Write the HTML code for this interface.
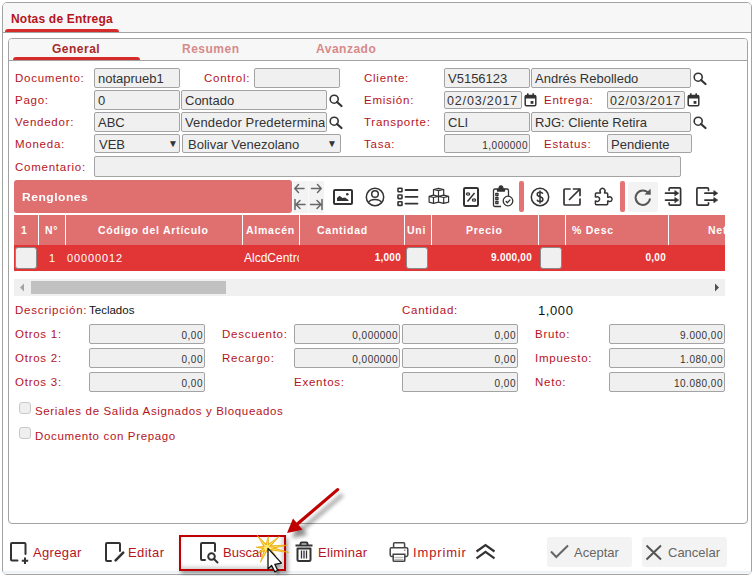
<!DOCTYPE html>
<html><head><meta charset="utf-8">
<style>
*{box-sizing:border-box;margin:0;padding:0}
html,body{width:755px;height:576px;overflow:hidden;background:#fff;font-family:"Liberation Sans",sans-serif;position:relative}
.a{position:absolute}
.frame{left:2px;top:2px;width:750px;height:573px;border:1px solid #a3a3a3;border-radius:5px;background:#fff}
.hdr{left:3px;top:3px;width:748px;height:29px;background:#f7f7f7;border-radius:4px 4px 0 0}
.hline{left:3px;top:32px;width:748px;height:1px;background:#a3a3a3}
.title{left:11px;top:12px;font-size:12px;font-weight:bold;color:#b5141e;letter-spacing:0.2px;line-height:14px}
.redbar{background:#d62b2b;border-radius:3px 3px 0 0}
.panel{left:8px;top:38px;width:740px;height:486px;border:1px solid #a3a3a3;border-radius:4px;background:#fff}
.tabs{left:9px;top:39px;width:738px;height:21px;background:#f7f7f7;border-radius:3px 3px 0 0}
.tline{left:9px;top:60px;width:738px;height:1px;background:#a3a3a3}
.tab{top:42px;font-size:12px;font-weight:bold;letter-spacing:0.5px;line-height:14px;color:#d68a8a}
.lbl{font-size:11.5px;letter-spacing:0.75px;color:#b5141e;line-height:13px;white-space:nowrap;margin-top:1px}
.inp{border:1px solid #a3a3a3;background:#f0f0f0;border-radius:2px;font-size:13px;color:#333;padding-left:3px;padding-top:1px;white-space:nowrap;overflow:hidden}
.num{font-size:10px;text-align:right;padding-right:1px;padding-left:0;padding-top:2px;color:#333;letter-spacing:0.5px}
.ic{position:absolute;overflow:visible;z-index:2}
.hd{font-size:10.5px;font-weight:bold;letter-spacing:0.75px;color:#fff;line-height:13px;white-space:nowrap}
.cell{font-size:12px;color:#fff;line-height:14px;white-space:nowrap}
.cb{background:#f0f0f0;border:1px solid #8a8a8a;border-radius:3px}
.tbt{font-size:13px;color:#b5141e;line-height:15px;white-space:nowrap}
</style></head><body>
<div class="a frame"></div>
<div class="a hdr"></div>
<div class="a" style="left:3px;top:571px;width:748px;height:3px;background:linear-gradient(#eef2f5,#eef2f5 66%,#f6f9fb 66%);border-radius:0 0 4px 4px"></div>
<div class="a hline"></div>
<div class="a title">Notas de Entrega</div>
<div class="a redbar" style="left:5px;top:29px;width:114px;height:3px"></div>

<div class="a panel"></div>
<div class="a tabs"></div>
<div class="a tline"></div>
<div class="a tab" style="left:52px;color:#a82a2a">General</div>
<div class="a tab" style="left:182px">Resumen</div>
<div class="a tab" style="left:316px">Avanzado</div>
<div class="a redbar" style="left:13px;top:57px;width:127px;height:3px"></div>

<!-- form labels -->
<div class="a lbl" style="left:15px;top:71px">Documento:</div>
<div class="a lbl" style="left:204px;top:71px">Control:</div>
<div class="a lbl" style="left:364px;top:71px">Cliente:</div>
<div class="a lbl" style="left:15px;top:93px">Pago:</div>
<div class="a lbl" style="left:364px;top:93px">Emisión:</div>
<div class="a lbl" style="left:544px;top:93px">Entrega:</div>
<div class="a lbl" style="left:15px;top:115px">Vendedor:</div>
<div class="a lbl" style="left:364px;top:115px">Transporte:</div>
<div class="a lbl" style="left:15px;top:137px">Moneda:</div>
<div class="a lbl" style="left:364px;top:137px">Tasa:</div>
<div class="a lbl" style="left:544px;top:137px">Estatus:</div>
<div class="a lbl" style="left:15px;top:160px">Comentario:</div>

<!-- inputs row1 -->
<div class="a inp" style="left:94px;top:68px;width:86px;height:20px;line-height:18px">notaprueb1</div>
<div class="a inp" style="left:254px;top:68px;width:86px;height:20px"></div>
<div class="a inp" style="left:444px;top:68px;width:86px;height:20px;line-height:18px">V5156123</div>
<div class="a inp" style="left:531px;top:68px;width:160px;height:20px;line-height:18px">Andrés Rebolledo</div>
<!-- row2 -->
<div class="a inp" style="left:94px;top:90px;width:86px;height:20px;line-height:18px">0</div>
<div class="a inp" style="left:181px;top:90px;width:146px;height:20px;line-height:18px">Contado</div>
<div class="a inp" style="left:444px;top:91px;width:78px;height:18px;line-height:16px;padding-left:2px;letter-spacing:0.85px;font-size:12.5px">02/03/2017</div>
<div class="a inp" style="left:607px;top:91px;width:78px;height:18px;line-height:16px;padding-left:2px;letter-spacing:0.85px;font-size:12.5px">02/03/2017</div>
<!-- row3 -->
<div class="a inp" style="left:94px;top:112px;width:86px;height:20px;line-height:18px">ABC</div>
<div class="a inp" style="left:181px;top:112px;width:146px;height:20px;line-height:18px"><div style="width:140px;overflow:hidden;letter-spacing:0.15px">Vendedor Predeterminado</div></div>
<div class="a inp" style="left:444px;top:112px;width:86px;height:20px;line-height:18px">CLI</div>
<div class="a inp" style="left:531px;top:112px;width:160px;height:20px;line-height:18px">RJG: Cliente Retira</div>
<!-- row4 -->
<div class="a inp" style="left:94px;top:134px;width:86px;height:19px;line-height:17px;padding-left:4px">VEB<span class="a" style="left:73px;top:0;font-size:10px;color:#333">&#9660;</span></div>
<div class="a inp" style="left:182px;top:134px;width:159px;height:19px;line-height:17px;padding-left:5px">Bolivar Venezolano<span class="a" style="left:144px;top:0;font-size:10px;color:#333">&#9660;</span></div>
<div class="a inp num" style="left:444px;top:134px;width:86px;height:19px;line-height:17px">1,000000</div>
<div class="a inp" style="left:607px;top:134px;width:85px;height:19px;line-height:17px">Pendiente</div>
<!-- row5 -->
<div class="a inp" style="left:94px;top:156px;width:587px;height:21px"></div>

<!-- search icons -->
<svg class="ic" style="left:329px;top:94px" width="14" height="13" viewBox="0 0 14 13"><circle cx="5.2" cy="5.2" r="4" fill="none" stroke="#333" stroke-width="1.6"/><path d="M8 8 L12.5 12" stroke="#333" stroke-width="2.2" stroke-linecap="round"/></svg>
<svg class="ic" style="left:329px;top:116px" width="14" height="13" viewBox="0 0 14 13"><circle cx="5.2" cy="5.2" r="4" fill="none" stroke="#333" stroke-width="1.6"/><path d="M8 8 L12.5 12" stroke="#333" stroke-width="2.2" stroke-linecap="round"/></svg>
<svg class="ic" style="left:693px;top:72px" width="14" height="13" viewBox="0 0 14 13"><circle cx="5.2" cy="5.2" r="4" fill="none" stroke="#333" stroke-width="1.6"/><path d="M8 8 L12.5 12" stroke="#333" stroke-width="2.2" stroke-linecap="round"/></svg>
<svg class="ic" style="left:693px;top:116px" width="14" height="13" viewBox="0 0 14 13"><circle cx="5.2" cy="5.2" r="4" fill="none" stroke="#333" stroke-width="1.6"/><path d="M8 8 L12.5 12" stroke="#333" stroke-width="2.2" stroke-linecap="round"/></svg>
<!-- calendar icons -->
<svg class="ic" style="left:524px;top:93px" width="13" height="14" viewBox="0 0 13 14"><rect x="1.2" y="2.6" width="10.6" height="10.2" rx="1.2" fill="none" stroke="#333" stroke-width="1.5"/><rect x="1" y="2.4" width="11" height="3.2" rx="1" fill="#333"/><rect x="3" y="0.3" width="1.6" height="2.6" fill="#333"/><rect x="8.4" y="0.3" width="1.6" height="2.6" fill="#333"/><rect x="6.6" y="8" width="2.8" height="2.8" fill="#333"/></svg>
<svg class="ic" style="left:687px;top:93px" width="13" height="14" viewBox="0 0 13 14"><rect x="1.2" y="2.6" width="10.6" height="10.2" rx="1.2" fill="none" stroke="#333" stroke-width="1.5"/><rect x="1" y="2.4" width="11" height="3.2" rx="1" fill="#333"/><rect x="3" y="0.3" width="1.6" height="2.6" fill="#333"/><rect x="8.4" y="0.3" width="1.6" height="2.6" fill="#333"/><rect x="6.6" y="8" width="2.8" height="2.8" fill="#333"/></svg>

<!-- GRID TOOLBAR -->
<div class="a" style="left:14px;top:180px;width:278px;height:33px;background:#e07070;border-radius:3px"></div>
<div class="a hd" style="left:22px;top:191px;font-size:11px;letter-spacing:0.45px;transform:scaleX(1.1);transform-origin:0 0">Renglones</div>
<!-- arrow group -->
<div class="a" style="left:293px;top:181px;width:31px;height:32px;background:#f3f3f3"></div>
<div class="a" style="left:308px;top:181px;width:1px;height:32px;background:#fafafa"></div>
<svg class="ic" style="left:293px;top:181px" width="31" height="32" viewBox="0 0 31 32">
<g fill="none" stroke="#666" stroke-width="1.5" stroke-linecap="round" stroke-linejoin="round">
<path d="M2 7.5 H11 M5.5 3.5 L1.8 7.5 L5.5 11.5"/>
<path d="M18.5 7.5 H28 M24.5 3.5 L28.2 7.5 L24.5 11.5"/>
<path d="M2 18.5 V28.5 M3 23.5 H12 M7 19.5 L3 23.5 L7 27.5"/>
<path d="M29 18.5 V28.5 M17.5 23.5 H28 M24 19.5 L28 23.5 L24 27.5"/>
</g></svg>
<!-- image icon -->
<svg class="ic" style="left:333px;top:189px" width="20" height="16" viewBox="0 0 20 16">
<rect x="1" y="1" width="18" height="14" rx="1" fill="none" stroke="#333" stroke-width="2"/>
<path d="M4 12 L4 9 L6.5 6.8 L9.5 9 L12 8.5 L15.5 11 L15.5 12 Z" fill="#333"/>
<circle cx="14.3" cy="5.2" r="1.3" fill="#333"/>
</svg>
<!-- user icon -->
<svg class="ic" style="left:365px;top:187px" width="20" height="20" viewBox="0 0 20 20">
<circle cx="10" cy="10" r="8.7" fill="none" stroke="#333" stroke-width="1.5"/>
<circle cx="10" cy="7" r="3.3" fill="none" stroke="#333" stroke-width="1.5"/>
<path d="M3.7 15 C6 11.5 14 11.5 16.3 15" fill="none" stroke="#333" stroke-width="1.5"/>
</svg>
<!-- list icon -->
<svg class="ic" style="left:397px;top:187px" width="22" height="20" viewBox="0 0 22 20">
<g fill="none" stroke="#333" stroke-width="1.6">
<rect x="1" y="1.2" width="4" height="3.6" rx="0.5"/>
<rect x="1" y="8" width="4" height="3.6" rx="0.5"/>
<rect x="1" y="14.8" width="4" height="3.6" rx="0.5"/>
</g>
<g stroke="#333" stroke-width="1.8" stroke-linecap="round">
<path d="M8.5 3 H20.5 M8.5 9.8 H20.5 M8.5 16.6 H20.5"/>
</g></svg>
<!-- boxes icon -->
<svg class="ic" style="left:426px;top:186px" width="26" height="20" viewBox="0 0 26 20">
<g fill="none" stroke="#333" stroke-width="1.2" stroke-linejoin="round">
<path d="M7.5 3.5 L12.5 2.3 L17.7 3.5 L12.5 4.7 Z M7.5 3.5 V9.5 M12.5 4.7 V10.4 M17.7 3.5 V9.5"/>
<path d="M3.1 10.4 L7.5 9.2 L12.5 10.4 L7.5 11.5 Z M3.1 10.4 V16.1 L7.5 17.3 L12.5 16.1 V10.4 M7.5 11.5 V17.3"/>
<path d="M12.5 10.4 L17.7 9.2 L22.6 10.4 L17.7 11.5 Z M12.5 16.1 L17.7 17.3 L22.6 16.1 V10.4 M17.7 11.5 V17.3"/>
</g></svg>
<!-- percent icon -->
<svg class="ic" style="left:463px;top:187px" width="16" height="20" viewBox="0 0 16 20">
<rect x="1" y="1" width="14" height="18" rx="1.2" fill="none" stroke="#333" stroke-width="2"/>
<path d="M11.5 6 L4.5 14.5" stroke="#333" stroke-width="1.5"/>
<ellipse cx="5" cy="7" rx="1.6" ry="1.2" fill="none" stroke="#333" stroke-width="1.3"/>
<ellipse cx="11" cy="13" rx="1.6" ry="1.2" fill="none" stroke="#333" stroke-width="1.3"/>
</svg>
<!-- clipboard icon -->
<svg class="ic" style="left:492px;top:185px" width="22" height="23" viewBox="0 0 22 23">
<g fill="none" stroke="#333" stroke-width="1.3" stroke-linejoin="round">
<path d="M9 21.5 H3 Q1.5 21.5 1.5 20 V5.5 Q1.5 4 3 4 H5.5 M12.5 4 H15 Q16.5 4 16.5 5.5 V11"/>
<path d="M5.5 6 H12.5 V4 H11 Q11 1 9 1 Q7 1 7 4 H5.5 Z" fill="#333"/>
<rect x="3.8" y="8.5" width="2.2" height="2" />
<rect x="3.8" y="12.5" width="2.2" height="2" />
<rect x="3.8" y="16.5" width="2.2" height="2" />
<circle cx="16" cy="16" r="4.8" fill="#fff"/>
<path d="M13.7 16 L15.4 17.7 L18.3 14.6"/>
</g></svg>
<div class="a" style="left:519px;top:181px;width:5px;height:31px;background:#e57373;border-radius:2px"></div>
<!-- dollar -->
<svg class="ic" style="left:530px;top:187px" width="20" height="20" viewBox="0 0 20 20">
<circle cx="10" cy="10" r="8.7" fill="none" stroke="#333" stroke-width="1.5"/>
<path d="M12.8 6.8 Q12.3 5.2 10 5.2 Q7.2 5.2 7.2 7.3 Q7.2 9.2 10 9.7 Q12.9 10.2 12.9 12.4 Q12.9 14.6 10 14.6 Q7.5 14.6 7 12.8 M10 3.5 V16.5" fill="none" stroke="#333" stroke-width="1.5"/>
</svg>
<!-- external link -->
<svg class="ic" style="left:563px;top:188px" width="19" height="18" viewBox="0 0 19 18">
<path d="M7 1 H2 Q1 1 1 2 V16 Q1 17 2 17 H16 Q17 17 17 16 V11" fill="none" stroke="#333" stroke-width="1.7" stroke-linecap="round"/>
<path d="M6.5 11.5 L17 1 M10.5 1 H17 V7.5" fill="none" stroke="#333" stroke-width="1.7" stroke-linecap="round" stroke-linejoin="round"/>
</svg>
<!-- puzzle -->
<svg class="ic" style="left:590px;top:184px" width="28" height="24" viewBox="0 0 28 24">
<path d="M6.4 9 H10.4 V8.2 A2.5 2.5 0 1 1 14.6 8.2 V9 H16.7 Q17.7 9 17.7 10 V13.3 H18.5 A2.3 2.3 0 1 1 18.5 17.1 H17.7 V19.8 Q17.7 20.8 16.7 20.8 H6.4 Q5.4 20.8 5.4 19.8 V17.1 H6.2 A2.3 2.3 0 1 0 6.2 13.1 H5.4 V10 Q5.4 9 6.4 9 Z" fill="none" stroke="#333" stroke-width="1.5" stroke-linejoin="round"/>
</svg>
<div class="a" style="left:620px;top:181px;width:5px;height:31px;background:#e57373;border-radius:2px"></div>
<!-- refresh -->
<div class="a" style="left:628px;top:182px;width:30px;height:30px;background:#f3f3f3;border-radius:2px"></div>
<svg class="ic" style="left:633px;top:188px" width="20" height="19" viewBox="0 0 20 19">
<path d="M15.5 5.2 A7.2 7.2 0 1 0 17 10.5" fill="none" stroke="#555" stroke-width="2"/>
<path d="M11.5 6.5 L17.8 6.8 L17.5 0.8 Z" fill="#555"/>
</svg>
<!-- import + export -->
<svg class="ic" style="left:660px;top:184px" width="64" height="26" viewBox="0 0 64 26">
<g fill="none" stroke="#333" stroke-width="1.7" stroke-linecap="round">
<path d="M9.1 6.3 V5 Q9.1 3.9 10.2 3.9 H19.5 Q20.6 3.9 20.6 5 V20.1 Q20.6 21.2 19.5 21.2 H10.2 Q9.1 21.2 9.1 20.1 V18.8"/>
<path d="M5.5 9.2 H15.5 M5.5 16.1 H15.5"/>
<path d="M48.5 6.3 V5 Q48.5 3.9 47.4 3.9 H38 Q36.9 3.9 36.9 5 V20.1 Q36.9 21.2 38 21.2 H47.4 Q48.5 21.2 48.5 20.1 V18.8"/>
<path d="M44.9 9.2 H54.5 M44.9 16.1 H54.5"/>
</g>
<path d="M14.8 6.5 L18.8 9.2 L14.8 11.9 Z M14.8 13.4 L18.8 16.1 L14.8 18.8 Z M53.8 6.5 L57.8 9.2 L53.8 11.9 Z M53.8 13.4 L57.8 16.1 L53.8 18.8 Z" fill="#333" stroke="#333" stroke-width="0.6" stroke-linejoin="round"/>
</svg>
<!-- GRID -->
<div class="a" style="left:14px;top:215px;width:711px;height:30px;background:#e07070"></div>
<div class="a" style="left:14px;top:245px;width:711px;height:26px;background:#e23535"></div>
<div class="a" style="left:38px;top:215px;width:1px;height:30px;background:#fff"></div>
<div class="a" style="left:65px;top:215px;width:1px;height:30px;background:#fff"></div>
<div class="a" style="left:242px;top:215px;width:1px;height:30px;background:#fff"></div>
<div class="a" style="left:299px;top:215px;width:1px;height:30px;background:#fff"></div>
<div class="a" style="left:404px;top:215px;width:1px;height:30px;background:#fff"></div>
<div class="a" style="left:431px;top:215px;width:1px;height:30px;background:#fff"></div>
<div class="a" style="left:538px;top:215px;width:1px;height:30px;background:#fff"></div>
<div class="a" style="left:565px;top:215px;width:1px;height:30px;background:#fff"></div>
<div class="a" style="left:668px;top:215px;width:1px;height:30px;background:#fff"></div>
<div class="a hd" style="left:21px;top:224px">1</div>
<div class="a hd" style="left:45px;top:224px">N°</div>
<div class="a hd" style="left:98px;top:224px">Código del Artículo</div>
<div class="a hd" style="left:246px;top:224px">Almacén</div>
<div class="a hd" style="left:317px;top:224px">Cantidad</div>
<div class="a hd" style="left:407px;top:224px">Uni</div>
<div class="a hd" style="left:466px;top:224px">Precio</div>
<div class="a hd" style="left:572px;top:224px">% Desc</div>
<div class="a" style="left:700px;top:224px;width:25px;overflow:hidden"><div class="hd" style="padding-left:8px">Netos</div></div>
<div class="a cb" style="left:15px;top:247px;width:22px;height:22px"></div>
<div class="a cb" style="left:406px;top:247px;width:22px;height:22px"></div>
<div class="a cb" style="left:540px;top:247px;width:22px;height:22px"></div>
<div class="a cell" style="left:49px;top:251px;font-size:11px">1</div>
<div class="a cell" style="left:67px;top:251px;font-size:11px;letter-spacing:0.9px">00000012</div>
<div class="a" style="left:244px;top:251px;width:55px;overflow:hidden"><div class="cell" style="font-size:12px">AlcdCentro</div></div>
<div class="a cell" style="left:300px;top:251px;width:101px;text-align:right;font-size:10px;font-weight:bold;letter-spacing:0.25px">1,000</div>
<div class="a cell" style="left:432px;top:251px;width:100px;text-align:right;font-size:10px;font-weight:bold;letter-spacing:0.25px">9.000,00</div>
<div class="a cell" style="left:566px;top:251px;width:100px;text-align:right;font-size:10px;font-weight:bold;letter-spacing:0.25px">0,00</div>

<!-- scrollbar -->
<div class="a" style="left:14px;top:279px;width:711px;height:17px;background:#f0f0f0"></div>
<div class="a" style="left:31px;top:281px;width:195px;height:13px;background:#c1c1c1"></div>
<svg class="ic" style="left:19px;top:283px" width="6" height="9" viewBox="0 0 6 9"><path d="M5 0.5 L1 4.5 L5 8.5 Z" fill="#a3a3a3"/></svg>
<svg class="ic" style="left:714px;top:283px" width="6" height="9" viewBox="0 0 6 9"><path d="M1 0.5 L5 4.5 L1 8.5 Z" fill="#505050"/></svg>

<!-- lower form -->
<div class="a lbl" style="left:15px;top:303px">Descripción:</div>
<div class="a" style="left:89px;top:304px;font-size:11.5px;color:#111;line-height:13px">Teclados</div>
<div class="a lbl" style="left:402px;top:303px">Cantidad:</div>
<div class="a" style="left:538px;top:303px;font-size:13px;color:#111;line-height:15px;letter-spacing:0.6px">1,000</div>

<div class="a lbl" style="left:15px;top:327px">Otros 1:</div>
<div class="a lbl" style="left:15px;top:351px">Otros 2:</div>
<div class="a lbl" style="left:15px;top:375px">Otros 3:</div>
<div class="a lbl" style="left:222px;top:327px">Descuento:</div>
<div class="a lbl" style="left:222px;top:351px">Recargo:</div>
<div class="a lbl" style="left:294px;top:375px">Exentos:</div>
<div class="a lbl" style="left:535px;top:327px">Bruto:</div>
<div class="a lbl" style="left:535px;top:351px">Impuesto:</div>
<div class="a lbl" style="left:535px;top:375px">Neto:</div>

<div class="a inp num" style="left:89px;top:324px;width:116px;height:20px;line-height:18px">0,00</div>
<div class="a inp num" style="left:89px;top:348px;width:116px;height:20px;line-height:18px">0,00</div>
<div class="a inp num" style="left:89px;top:372px;width:116px;height:20px;line-height:18px">0,00</div>
<div class="a inp num" style="left:294px;top:324px;width:106px;height:20px;line-height:18px">0,000000</div>
<div class="a inp num" style="left:294px;top:348px;width:106px;height:20px;line-height:18px">0,000000</div>
<div class="a inp num" style="left:402px;top:324px;width:116px;height:20px;line-height:18px">0,00</div>
<div class="a inp num" style="left:402px;top:348px;width:116px;height:20px;line-height:18px">0,00</div>
<div class="a inp num" style="left:402px;top:372px;width:116px;height:20px;line-height:18px">0,00</div>
<div class="a inp num" style="left:609px;top:324px;width:116px;height:20px;line-height:18px">9.000,00</div>
<div class="a inp num" style="left:609px;top:348px;width:116px;height:20px;line-height:18px">1.080,00</div>
<div class="a inp num" style="left:609px;top:372px;width:116px;height:20px;line-height:18px">10.080,00</div>

<div class="a" style="left:19px;top:402px;width:12px;height:12px;border:1px solid #c8c8c8;border-radius:3px;background:#efefef"></div>
<div class="a lbl" style="left:35px;top:404px;letter-spacing:0.65px">Seriales de Salida Asignados y Bloqueados</div>
<div class="a" style="left:19px;top:427px;width:12px;height:12px;border:1px solid #c8c8c8;border-radius:3px;background:#efefef"></div>
<div class="a lbl" style="left:35px;top:429px;letter-spacing:0.65px">Documento con Prepago</div>

<!-- bottom toolbar -->
<svg class="ic" style="left:8px;top:540px" width="24" height="26" viewBox="0 0 24 26">
<path d="M9.5 20.5 H4 Q3 20.5 3 19.5 V4 Q3 3 4 3 H16.5 Q17.5 3 17.5 4 V14" fill="none" stroke="#333" stroke-width="2" stroke-linecap="round"/>
<path d="M17 17.5 V24 M13.8 20.8 H20.2" stroke="#333" stroke-width="2"/>
</svg>
<svg class="ic" style="left:103px;top:540px" width="24" height="26" viewBox="0 0 24 26">
<path d="M8 21 H4 Q3 21 3 20 V4 Q3 3 4 3 H16 Q17 3 17 4 V11" fill="none" stroke="#333" stroke-width="2" stroke-linecap="round"/>
<path d="M12.6 20.4 L20.2 12.6" stroke="#333" stroke-width="2.6" stroke-linecap="round"/>
</svg>
<svg class="ic" style="left:198px;top:540px" width="24" height="26" viewBox="0 0 24 26">
<path d="M7 20 H4 Q3 20 3 19 V4 Q3 3 4 3 H16 Q17 3 17 4 V11" fill="none" stroke="#333" stroke-width="2" stroke-linecap="round"/>
<circle cx="13.5" cy="16.5" r="3.3" fill="none" stroke="#333" stroke-width="2"/>
<path d="M16 19 L19.5 22.5" stroke="#333" stroke-width="2" stroke-linecap="round"/>
</svg>
<svg class="ic" style="left:294px;top:541px" width="20" height="22" viewBox="0 0 20 22">
<path d="M1.5 4.5 H18.5 M6.5 4.5 V2.8 Q6.5 1.5 7.8 1.5 H12.2 Q13.5 1.5 13.5 2.8 V4.5" fill="none" stroke="#333" stroke-width="2"/>
<path d="M3.5 7.5 V18.5 Q3.5 20 5 20 H15 Q16.5 20 16.5 18.5 V7.5 Z" fill="none" stroke="#333" stroke-width="2" stroke-linejoin="round"/>
<path d="M7.5 9.5 V17.5 M10 9.5 V17.5 M12.5 9.5 V17.5" stroke="#333" stroke-width="1.3"/>
</svg>
<svg class="ic" style="left:388px;top:541px" width="22" height="22" viewBox="0 0 22 22">
<path d="M5.6 6.5 V2.8 Q5.6 1.8 6.6 1.8 H15.6 Q16.6 1.8 16.6 2.8 V6.5" fill="none" stroke="#444" stroke-width="1.5"/>
<path d="M5 15.5 H3.6 Q2.2 15.5 2.2 14.1 V8.2 Q2.2 6.8 3.6 6.8 H18.4 Q19.8 6.8 19.8 8.2 V14.1 Q19.8 15.5 18.4 15.5 H17" fill="none" stroke="#444" stroke-width="1.5"/>
<path d="M5.2 13.2 H16.8 V19.4 Q16.8 20.3 15.9 20.3 H6.1 Q5.2 20.3 5.2 19.4 Z" fill="none" stroke="#444" stroke-width="1.5"/>
<path d="M6.5 16.3 H15.5 M6.5 18.3 H15.5" stroke="#aaa" stroke-width="1"/>
<circle cx="16.8" cy="9.3" r="0.7" fill="#666"/>
</svg>
<svg class="ic" style="left:475px;top:543px" width="21" height="17" viewBox="0 0 21 17">
<path d="M1.5 8.5 L10.5 2 L19.5 8.5 M1.5 15.3 L10.5 8.8 L19.5 15.3" fill="none" stroke="#333" stroke-width="2.2"/>
</svg>
<svg class="ic" style="left:549px;top:543px" width="21" height="17" viewBox="0 0 21 17">
<path d="M2 8.5 L7.3 14 L19 2.5" fill="none" stroke="#666" stroke-width="2"/>
</svg>
<svg class="ic" style="left:645px;top:544px" width="18" height="17" viewBox="0 0 18 17">
<path d="M1.5 1.5 L16 15.5 M16 1.5 L1.5 15.5" fill="none" stroke="#555" stroke-width="2"/>
</svg>
<div class="a tbt" style="left:33px;top:545px;letter-spacing:0.35px">Agregar</div>
<div class="a tbt" style="left:128px;top:545px;letter-spacing:0.4px">Editar</div>
<div class="a tbt" style="left:223px;top:545px">Buscar</div>
<div class="a tbt" style="left:318px;top:545px;letter-spacing:0.3px">Eliminar</div>
<div class="a tbt" style="left:413px;top:545px;letter-spacing:0.85px">Imprimir</div>
<div class="a" style="left:547px;top:537px;width:85px;height:30px;background:#f3f3f3;border-radius:3px"></div>
<div class="a tbt" style="left:574px;top:545px;color:#666">Aceptar</div>
<div class="a" style="left:642px;top:537px;width:85px;height:30px;background:#f3f3f3;border-radius:3px"></div>
<div class="a tbt" style="left:668px;top:545px;color:#666">Cancelar</div>

<!-- annotation box -->
<div class="a" style="left:179px;top:535px;width:107px;height:36px;border:2px solid #c00000;box-shadow:2px 3px 4px rgba(0,0,0,0.35), inset -2px -2px 4px rgba(0,0,0,0.2)"></div>
<!-- arrow -->
<svg class="ic" style="left:270px;top:480px" width="90" height="70" viewBox="0 0 90 70">
<defs><filter id="sh" x="-30%" y="-30%" width="160%" height="160%"><feGaussianBlur stdDeviation="2.2"/></filter></defs>
<g transform="translate(5,5)" opacity="0.45" filter="url(#sh)">
<path d="M67.6 9.6 L25 46" stroke="#000" stroke-width="3.2"/>
<path d="M17 53 L23 38.4 L32.6 49.7 Z" fill="#000"/>
</g>
<path d="M67.6 9.6 L25 46" stroke="#c00000" stroke-width="3.2" stroke-linecap="round"/>
<path d="M17 53 L23 38.4 L32.6 49.7 Z" fill="#c00000"/>
</svg>
<!-- starburst -->
<svg class="ic" style="left:248px;top:528px" width="45" height="40" viewBox="0 0 45 40">
<path d="M20.3 18.4 L9.2 7.2 L17.3 20.8 Z M20.7 19.9 L20.4 8.4 L16.9 19.3 Z M20.1 21.0 L31.2 8.4 L17.5 18.2 Z M19.0 21.5 L39.5 17.2 L18.6 17.7 Z M18.4 21.5 L40.7 24.4 L19.2 17.7 Z M18.9 17.7 L8.0 19.2 L18.7 21.5 Z M17.1 18.8 L12.4 34.3 L20.5 20.4 Z M17.8 18.0 L9.5 25.5 L19.8 21.2 Z M17.5 21.0 L28.0 28.0 L20.1 18.2 Z " fill="#f0b000" stroke="#e8a800" stroke-width="0.6" stroke-linejoin="round"/>
<path d="M19.4 19.2 L11.1 9.7 L18.2 20.0 Z M19.5 19.7 L20.1 10.6 L18.1 19.5 Z M19.3 20.1 L28.7 10.6 L18.3 19.1 Z M18.9 20.3 L35.4 17.7 L18.7 18.9 Z M18.7 20.3 L36.3 23.4 L18.9 18.9 Z M18.8 18.9 L10.2 19.3 L18.8 20.3 Z M18.2 19.3 L13.7 31.4 L19.4 19.9 Z M18.4 19.0 L11.4 24.3 L19.2 20.2 Z M18.3 20.1 L26.2 26.3 L19.3 19.1 Z " fill="#fff090"/>
<circle cx="18.8" cy="19.6" r="2.6" fill="#ffe870"/>
</svg>
<!-- cursor -->
<svg class="ic" style="left:260px;top:540px" width="30" height="36" viewBox="0 0 30 36">
<defs><filter id="cs" x="-50%" y="-50%" width="200%" height="200%"><feGaussianBlur stdDeviation="1.2"/></filter></defs>
<path d="M9.5 9.5 V30 L12.5 26.5 L15.8 33 L18.6 31.6 L15.6 25.4 L20.5 25.2 Z" fill="#000" opacity="0.35" filter="url(#cs)" transform="translate(1.5,1.5)"/>
<path d="M8 8.4 V29 L11.6 25.5 L14.8 31.9 L17.6 30.3 L14.8 24.3 L21.5 23.1 Z" fill="#fff" stroke="#111" stroke-width="1.3" stroke-linejoin="round"/>
</svg>
</body></html>
